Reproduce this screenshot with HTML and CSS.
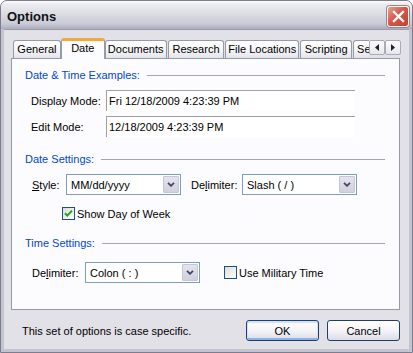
FILE: index.html
```html
<!DOCTYPE html>
<html lang="en">
<head>
    <meta charset="UTF-8">
    <title>Options</title>
    <link rel="stylesheet" href="styles.css">
</head>
<body>
    <div class="window">
        <div class="titlebar">
            <span class="title">Options</span>
            <button class="close">
                <svg width="13" height="13" viewBox="0 0 13 13"><path d="M2 2l9 9M11 2l-9 9" stroke="#fff" stroke-width="2.4" stroke-linecap="square"/></svg>
            </button>
        </div>
        <div class="client">
            <div class="tabs">
                <div class="tab w-general">General</div>
                <div class="tab active w-date">Date</div>
                <div class="tab w-docs">Documents</div>
                <div class="tab w-research">Research</div>
                <div class="tab w-files">File Locations</div>
                <div class="tab w-script">Scripting</div>
                <div class="tab cut">Se</div>
                <div class="tab-scroll">
                    <span class="scroll-btn"><svg width="4" height="7" viewBox="0 0 4 7"><path d="M4 0v7L0 3.5z" fill="#222"/></svg></span>
                    <span class="scroll-btn"><svg width="4" height="7" viewBox="0 0 4 7"><path d="M0 0v7l4-3.5z" fill="#222"/></svg></span>
                </div>
            </div>
            <div class="panel">
                <div class="heading"><span>Date &amp; Time Examples:</span><i class="rule"></i></div>
                <div class="examples">
                    <span class="label">Display Mode:</span>
                    <div class="readonly">Fri 12/18/2009 4:23:39 PM</div>
                    <span class="label">Edit Mode:</span>
                    <div class="readonly">12/18/2009 4:23:39 PM</div>
                </div>

                <div class="heading gap"><span>Date Settings:</span><i class="rule"></i></div>
                <div class="row">
                    <span class="label lbl-style"><u>S</u>tyle:</span>
                    <div class="combo"><span class="value">MM/dd/yyyy</span><span class="drop"><svg width="8" height="5" viewBox="0 0 8 5"><path d="M1 .8l3 3 3-3" stroke="#3f4662" stroke-width="1.8" fill="none"/></svg></span></div>
                    <span class="label lbl-delim">De<u>l</u>imiter:</span>
                    <div class="combo"><span class="value">Slash ( / )</span><span class="drop"><svg width="8" height="5" viewBox="0 0 8 5"><path d="M1 .8l3 3 3-3" stroke="#3f4662" stroke-width="1.8" fill="none"/></svg></span></div>
                </div>
                <label class="check day">
                    <span class="box"><svg width="9" height="9" viewBox="0 0 9 9"><path d="M1 4.2l2.3 2.4L8 1.6" stroke="#21a121" stroke-width="2" fill="none"/></svg></span>
                    Show Day of Week
                </label>

                <div class="heading gap"><span>Time Settings:</span><i class="rule"></i></div>
                <div class="row time">
                    <span class="label lbl-tdelim">De<u>l</u>imiter:</span>
                    <div class="combo"><span class="value">Colon ( : )</span><span class="drop"><svg width="8" height="5" viewBox="0 0 8 5"><path d="M1 .8l3 3 3-3" stroke="#3f4662" stroke-width="1.8" fill="none"/></svg></span></div>
                    <label class="check military">
                        <span class="box"></span>
                        Use Military Time
                    </label>
                </div>
            </div>
            <div class="footer">
                <span class="note">This set of options is case specific.</span>
                <button class="btn default">OK</button>
                <button class="btn">Cancel</button>
            </div>
        </div>
    </div>
</body>
</html>
```

FILE: styles.css
```css
body {
    margin: 0;
    font-family: 'Liberation Sans', Arial, sans-serif;
    font-size: 11px;
    color: #000;
}
.window {
    width: 413px;
    height: 353px;
    box-sizing: border-box;
    border: 1px solid #7d7d90;
    border-radius: 7px 7px 0 0;
    background: #c4c4d0;
    display: flex;
    flex-direction: column;
    overflow: hidden;
}
.titlebar {
    height: 28px;
    display: flex;
    align-items: center;
    justify-content: space-between;
    padding: 0 3px 0 6px;
    background: linear-gradient(#fdfdfd 0, #ebebf0 12%, #dcdce4 45%, #cbcbd8 80%, #adadc0 100%);
}
.title {
    font-size: 13px;
    font-weight: bold;
    color: #111;
    margin-top: 3px;
}
.close {
    width: 22px;
    height: 21px;
    margin-top: 3px;
    padding: 0;
    border: 1px solid #fff;
    border-radius: 3px;
    background: linear-gradient(135deg, #eaa193 0%, #d6574a 45%, #c1402f 100%);
    box-shadow: 0 0 0 1px #b57c80;
    display: flex;
    align-items: center;
    justify-content: center;
}
.client {
    flex: 1;
    margin: 0 3px 3px;
    background: #e2e1e8;
    padding: 8px 0 0 7px;
    border-top: 1px solid #9d9db0;
}
.tabs {
    display: flex;
    align-items: flex-end;
    height: 20px;
    width: 390px;
    padding-left: 2px;
    box-sizing: border-box;
    position: relative;
    z-index: 1;
}
.tab {
    height: 18px;
    box-sizing: border-box;
    border: 1px solid #959ba6;
    border-bottom: none;
    border-radius: 3px 3px 0 0;
    background: linear-gradient(#fff, #f3f3f6 60%, #e3e3ea);
    text-align: center;
    line-height: 17px;
    white-space: nowrap;
    margin-left: 1px;
}
.tab.active {
    height: 21px;
    margin-bottom: -1px;
    margin-left: 0;
    border-top: 3px solid #f0a93a;
    background: #fcfcfe;
    line-height: 14px;
}
.tab.w-general { width: 48px; margin-left: 0; }
.tab.w-date { width: 44px; }
.tab.w-docs { width: 62px; margin-left: 0; }
.tab.w-research { width: 57px; }
.tab.w-files { width: 74px; }
.tab.w-script { width: 52px; }
.tab.cut {
    width: 16px;
    overflow: hidden;
    text-align: left;
    padding-left: 3px;
    border-right: none;
    border-radius: 3px 0 0 0;
}
.tab-scroll {
    display: flex;
    align-self: flex-start;
    margin-top: 2px;
}
.scroll-btn {
    width: 16px;
    height: 15px;
    box-sizing: border-box;
    border: 1px solid #a9acb6;
    border-radius: 2px;
    background: linear-gradient(#fdfdfd, #e6e6ee);
    display: flex;
    align-items: center;
    justify-content: center;
}
.panel {
    width: 389px;
    height: 252px;
    box-sizing: border-box;
    border: 1px solid #959ba6;
    background: #fcfcfe;
    padding: 9px 14px 0 13px;
}
.heading {
    display: flex;
    align-items: center;
    gap: 7px;
    height: 14px;
    color: #0046d5;
}
.heading.gap { margin-top: 15px; }
.rule {
    flex: 1;
    height: 1px;
    background: #a5a5ad;
}
.examples {
    display: grid;
    grid-template-columns: 75px 249px;
    grid-auto-rows: 21px;
    row-gap: 5px;
    align-items: center;
    margin-top: 8px;
    padding-left: 6px;
}
.readonly {
    height: 21px;
    box-sizing: border-box;
    border-top: 1px solid #a0a0a0;
    border-left: 1px solid #a0a0a0;
    background: #fff;
    padding-left: 2px;
    line-height: 20px;
}
.row {
    display: flex;
    align-items: center;
    margin-top: 8px;
    padding-left: 7px;
}
.row.time { margin-top: 12px; }
.lbl-style { width: 34px; }
.lbl-delim { width: 51px; margin-left: 10px; }
.lbl-tdelim { width: 53px; }
.combo {
    width: 115px;
    height: 21px;
    box-sizing: border-box;
    border: 1px solid #7f9db9;
    background: #fff;
    display: flex;
    align-items: center;
    padding: 1px;
}
.combo .value {
    flex: 1;
    padding-left: 3px;
}
.drop {
    width: 16px;
    height: 17px;
    box-sizing: border-box;
    border: 1px solid #c6c7d6;
    border-radius: 1px;
    background: linear-gradient(#e4e4ee, #d0d0de);
    display: flex;
    align-items: center;
    justify-content: center;
}
.check {
    display: flex;
    align-items: center;
    gap: 2px;
    height: 15px;
}
.check.day {
    margin-top: 11px;
    padding-left: 37px;
}
.check.military { margin-left: 24px; }
.box {
    width: 13px;
    height: 13px;
    box-sizing: border-box;
    border: 1px solid #1c5180;
    background: linear-gradient(135deg, #dcdcd7, #fff);
    display: flex;
    align-items: center;
    justify-content: center;
}
.footer {
    display: flex;
    align-items: center;
    margin-top: 10px;
    padding-left: 11px;
}
.note { flex: 1; }
.btn {
    width: 73px;
    height: 21px;
    margin-right: 8px;
    padding: 0;
    font: inherit;
    color: #000;
    border: 1px solid #1f3f6a;
    border-radius: 3px;
    background: linear-gradient(#fff, #f4f4f8 50%, #dcdce6);
}
.btn:last-child { margin-right: 9px; }
.btn.default {
    box-shadow: inset 0 1px 0 1px #cfe3ff, inset 0 -1px 0 1px #8fb1e8;
}
```
